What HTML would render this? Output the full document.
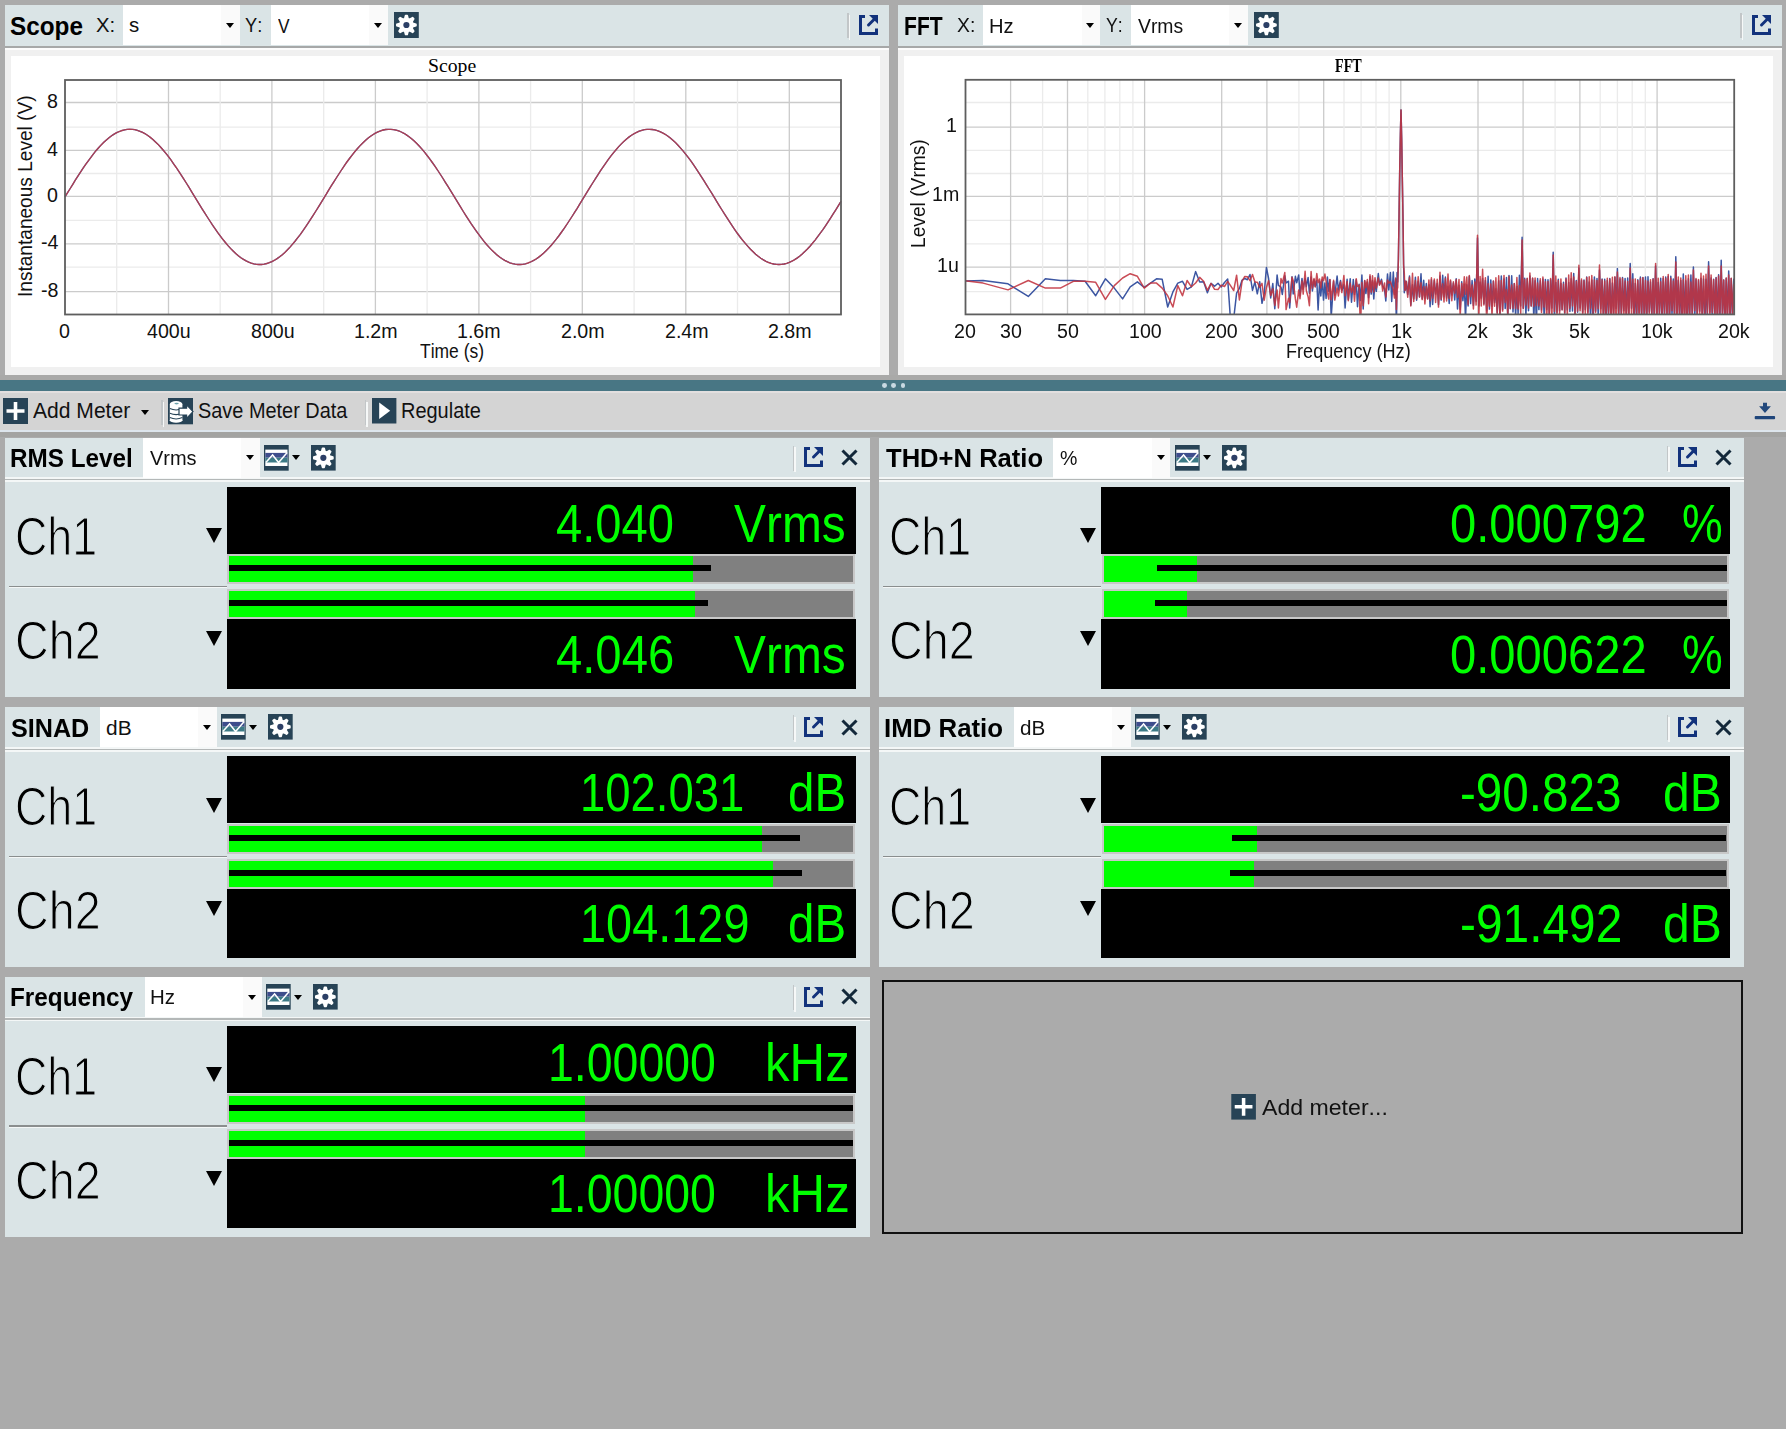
<!DOCTYPE html><html><head><meta charset="utf-8"><title>Meters</title><style>
*{box-sizing:border-box}
html,body{margin:0;padding:0}
body{width:1786px;height:1429px;background:#ababab;overflow:hidden;position:relative;font-family:"Liberation Sans",sans-serif;color:#000}
.abs{position:absolute}
.t{position:absolute;white-space:nowrap;transform-origin:0 0;font-kerning:none}
.panel{position:absolute;background:#f0f0f0}
.hdr{position:absolute;left:0;top:0;right:0;background:#dae4e6}
.dd{position:absolute;background:#fff}
.dd .btn{position:absolute;right:0;top:0;bottom:0;width:18.5px;background:#fafafa}
.tri{position:absolute;width:0;height:0;border-left:4.5px solid transparent;border-right:4.5px solid transparent;border-top:5px solid #000}
.blk{position:absolute;background:#000}
.bar{position:absolute;background:#808080;border:2px solid #c8c8c8;overflow:hidden}
.bar i{position:absolute;left:0;top:0;bottom:0;background:#00ff00}
.bar b{position:absolute;top:9.2px;height:6.1px;background:#000}
svg{position:absolute;overflow:visible}
#w{position:absolute;left:0;top:0;width:1786px;height:1429px;filter:blur(0.45px)}
</style></head><body><div id="w">
<div class="panel" style="left:4.5px;top:5.0px;width:884.3px;height:369.8px"><div class="hdr" style="height:40.6px"></div><div class="abs" style="left:0;right:0;top:40.6px;height:2.2px;background:#a6a8a8"></div><div class="abs" style="left:0;right:0;top:42.8px;height:2.3px;background:#fcfcfc"></div><div class="abs" style="left:6.0px;top:50.5px;width:869.8px;height:311.0px;background:#fff"></div></div>
<div class="panel" style="left:897.5px;top:5.0px;width:884.0px;height:369.8px"><div class="hdr" style="height:40.6px"></div><div class="abs" style="left:0;right:0;top:40.6px;height:2.2px;background:#a6a8a8"></div><div class="abs" style="left:0;right:0;top:42.8px;height:2.3px;background:#fcfcfc"></div><div class="abs" style="left:6.2px;top:50.5px;width:869.6px;height:311.0px;background:#fff"></div></div>
<div class="t " style="left:9.90px;top:9.53px;font-family:'Liberation Sans',sans-serif;font-weight:bold;font-size:24.86px;line-height:32.31px;color:#000;transform:scaleX(0.9778);">Scope</div>
<div class="t " style="left:95.84px;top:10.59px;font-family:'Liberation Sans',sans-serif;font-weight:normal;font-size:21.08px;line-height:27.40px;color:#111;transform:scaleX(0.9649);">X:</div>
<div class="dd" style="left:123.0px;top:5.0px;width:116.6px;height:40.0px"><div class="btn"></div><div class="tri" style="left:102.8px;top:17.8px;border-left-width:4.3px;border-right-width:4.3px;border-top-width:5.0px"></div></div>
<div class="t " style="left:128.93px;top:11.49px;font-family:'Liberation Sans',sans-serif;font-weight:normal;font-size:21.08px;line-height:27.40px;color:#111;transform:scaleX(0.9685);">s</div>
<div class="t " style="left:245.40px;top:10.59px;font-family:'Liberation Sans',sans-serif;font-weight:normal;font-size:21.08px;line-height:27.40px;color:#111;transform:scaleX(0.8673);">Y:</div>
<div class="dd" style="left:270.6px;top:5.0px;width:117.0px;height:40.0px"><div class="btn"></div><div class="tri" style="left:103.2px;top:17.8px;border-left-width:4.3px;border-right-width:4.3px;border-top-width:5.0px"></div></div>
<div class="t " style="left:278.12px;top:11.59px;font-family:'Liberation Sans',sans-serif;font-weight:normal;font-size:21.08px;line-height:27.40px;color:#111;transform:scaleX(0.8218);">V</div>
<svg style="left:393.5px;top:11.6px" width="24.8" height="26.0" viewBox="0 0 24.8 26.0"><rect width="24.8" height="26.0" fill="#274356"/><polygon points="11.57,3.44 13.23,3.44 14.09,6.62 15.71,7.29 18.58,5.65 19.75,6.82 18.11,9.69 18.78,11.31 21.96,12.17 21.96,13.83 18.78,14.69 18.11,16.31 19.75,19.18 18.58,20.35 15.71,18.71 14.09,19.38 13.23,22.56 11.57,22.56 10.71,19.38 9.09,18.71 6.22,20.35 5.05,19.18 6.69,16.31 6.02,14.69 2.84,13.83 2.84,12.17 6.02,11.31 6.69,9.69 5.05,6.82 6.22,5.65 9.09,7.29 10.71,6.62" fill="#fff" stroke="#fff" stroke-width="1.6" stroke-linejoin="round"/><circle cx="12.40" cy="13.00" r="3.1" fill="#2c3f66"/></svg>
<div class="abs" style="left:847.0px;top:13.0px;width:1.5px;height:25.0px;background:#c2c6c8"></div><div class="abs" style="left:848.5px;top:14.5px;width:1.5px;height:25.0px;background:#f6f8f8"></div>
<svg style="left:858.8px;top:14.8px" width="19" height="20" viewBox="0 0 19 20"><path d="M6 1.5H1.5V18.5H17.5V13.5" fill="none" stroke="#12327c" stroke-width="3"/><path d="M9.5 10 L15.5 4" fill="none" stroke="#12327c" stroke-width="3" stroke-linecap="round"/><path d="M10 0H19V9Z" fill="#12327c"/></svg>
<div class="t " style="left:903.89px;top:9.53px;font-family:'Liberation Sans',sans-serif;font-weight:bold;font-size:24.86px;line-height:32.31px;color:#000;transform:scaleX(0.8483);">FFT</div>
<div class="t " style="left:957.06px;top:10.59px;font-family:'Liberation Sans',sans-serif;font-weight:normal;font-size:21.08px;line-height:27.40px;color:#111;transform:scaleX(0.9192);">X:</div>
<div class="dd" style="left:983.0px;top:5.0px;width:117.0px;height:40.0px"><div class="btn"></div><div class="tri" style="left:103.2px;top:17.8px;border-left-width:4.3px;border-right-width:4.3px;border-top-width:5.0px"></div></div>
<div class="t " style="left:988.74px;top:11.59px;font-family:'Liberation Sans',sans-serif;font-weight:normal;font-size:21.08px;line-height:27.40px;color:#111;transform:scaleX(0.9574);">Hz</div>
<div class="t " style="left:1106.41px;top:10.59px;font-family:'Liberation Sans',sans-serif;font-weight:normal;font-size:21.08px;line-height:27.40px;color:#111;transform:scaleX(0.8388);">Y:</div>
<div class="dd" style="left:1130.6px;top:5.0px;width:117.0px;height:40.0px"><div class="btn"></div><div class="tri" style="left:103.2px;top:17.8px;border-left-width:4.3px;border-right-width:4.3px;border-top-width:5.0px"></div></div>
<div class="t " style="left:1138.11px;top:11.59px;font-family:'Liberation Sans',sans-serif;font-weight:normal;font-size:21.08px;line-height:27.40px;color:#111;transform:scaleX(0.9189);">Vrms</div>
<svg style="left:1254.0px;top:11.6px" width="24.8" height="26.0" viewBox="0 0 24.8 26.0"><rect width="24.8" height="26.0" fill="#274356"/><polygon points="11.57,3.44 13.23,3.44 14.09,6.62 15.71,7.29 18.58,5.65 19.75,6.82 18.11,9.69 18.78,11.31 21.96,12.17 21.96,13.83 18.78,14.69 18.11,16.31 19.75,19.18 18.58,20.35 15.71,18.71 14.09,19.38 13.23,22.56 11.57,22.56 10.71,19.38 9.09,18.71 6.22,20.35 5.05,19.18 6.69,16.31 6.02,14.69 2.84,13.83 2.84,12.17 6.02,11.31 6.69,9.69 5.05,6.82 6.22,5.65 9.09,7.29 10.71,6.62" fill="#fff" stroke="#fff" stroke-width="1.6" stroke-linejoin="round"/><circle cx="12.40" cy="13.00" r="3.1" fill="#2c3f66"/></svg>
<div class="abs" style="left:1740.0px;top:13.0px;width:1.5px;height:25.0px;background:#c2c6c8"></div><div class="abs" style="left:1741.5px;top:14.5px;width:1.5px;height:25.0px;background:#f6f8f8"></div>
<svg style="left:1751.8px;top:14.8px" width="19" height="20" viewBox="0 0 19 20"><path d="M6 1.5H1.5V18.5H17.5V13.5" fill="none" stroke="#12327c" stroke-width="3"/><path d="M9.5 10 L15.5 4" fill="none" stroke="#12327c" stroke-width="3" stroke-linecap="round"/><path d="M10 0H19V9Z" fill="#12327c"/></svg>
<svg style="left:0;top:0" width="893" height="376" viewBox="0 0 893 376"><line x1="65.0" y1="102.5" x2="841.0" y2="102.5" stroke="#cbcbcb" stroke-width="1.3"/><line x1="65.0" y1="127.2" x2="841.0" y2="127.2" stroke="#ebebeb" stroke-width="1.3"/><line x1="65.0" y1="150.4" x2="841.0" y2="150.4" stroke="#cbcbcb" stroke-width="1.3"/><line x1="65.0" y1="173.5" x2="841.0" y2="173.5" stroke="#ebebeb" stroke-width="1.3"/><line x1="65.0" y1="196.3" x2="841.0" y2="196.3" stroke="#cbcbcb" stroke-width="1.3"/><line x1="65.0" y1="220.4" x2="841.0" y2="220.4" stroke="#ebebeb" stroke-width="1.3"/><line x1="65.0" y1="243.9" x2="841.0" y2="243.9" stroke="#cbcbcb" stroke-width="1.3"/><line x1="65.0" y1="267.2" x2="841.0" y2="267.2" stroke="#ebebeb" stroke-width="1.3"/><line x1="65.0" y1="291.7" x2="841.0" y2="291.7" stroke="#cbcbcb" stroke-width="1.3"/><line x1="116.7" y1="80.0" x2="116.7" y2="314.5" stroke="#ebebeb" stroke-width="1.3"/><line x1="168.5" y1="80.0" x2="168.5" y2="314.5" stroke="#cbcbcb" stroke-width="1.3"/><line x1="220.2" y1="80.0" x2="220.2" y2="314.5" stroke="#ebebeb" stroke-width="1.3"/><line x1="271.9" y1="80.0" x2="271.9" y2="314.5" stroke="#cbcbcb" stroke-width="1.3"/><line x1="323.7" y1="80.0" x2="323.7" y2="314.5" stroke="#ebebeb" stroke-width="1.3"/><line x1="375.4" y1="80.0" x2="375.4" y2="314.5" stroke="#cbcbcb" stroke-width="1.3"/><line x1="427.1" y1="80.0" x2="427.1" y2="314.5" stroke="#ebebeb" stroke-width="1.3"/><line x1="478.9" y1="80.0" x2="478.9" y2="314.5" stroke="#cbcbcb" stroke-width="1.3"/><line x1="530.6" y1="80.0" x2="530.6" y2="314.5" stroke="#ebebeb" stroke-width="1.3"/><line x1="582.3" y1="80.0" x2="582.3" y2="314.5" stroke="#cbcbcb" stroke-width="1.3"/><line x1="634.1" y1="80.0" x2="634.1" y2="314.5" stroke="#ebebeb" stroke-width="1.3"/><line x1="685.8" y1="80.0" x2="685.8" y2="314.5" stroke="#cbcbcb" stroke-width="1.3"/><line x1="737.5" y1="80.0" x2="737.5" y2="314.5" stroke="#ebebeb" stroke-width="1.3"/><line x1="789.3" y1="80.0" x2="789.3" y2="314.5" stroke="#cbcbcb" stroke-width="1.3"/><polyline points="65.0,196.9 67.6,192.7 70.2,188.5 72.8,184.3 75.3,180.1 77.9,176.1 80.5,172.1 83.1,168.2 85.7,164.4 88.3,160.8 90.9,157.3 93.5,153.9 96.0,150.7 98.6,147.7 101.2,144.9 103.8,142.3 106.4,139.9 109.0,137.7 111.6,135.8 114.1,134.1 116.7,132.7 119.3,131.5 121.9,130.5 124.5,129.8 127.1,129.4 129.7,129.3 132.3,129.4 134.8,129.7 137.4,130.4 140.0,131.3 142.6,132.4 145.2,133.8 147.8,135.5 150.4,137.4 152.9,139.5 155.5,141.9 158.1,144.4 160.7,147.2 163.3,150.2 165.9,153.3 168.5,156.7 171.1,160.1 173.6,163.8 176.2,167.5 178.8,171.4 181.4,175.4 184.0,179.4 186.6,183.5 189.2,187.7 191.7,191.9 194.3,196.2 196.9,200.4 199.5,204.6 202.1,208.8 204.7,212.9 207.3,217.0 209.9,221.0 212.4,224.9 215.0,228.7 217.6,232.4 220.2,235.9 222.8,239.3 225.4,242.5 228.0,245.6 230.5,248.4 233.1,251.0 235.7,253.5 238.3,255.7 240.9,257.7 243.5,259.4 246.1,260.9 248.7,262.1 251.2,263.1 253.8,263.9 256.4,264.3 259.0,264.5 261.6,264.5 264.2,264.1 266.8,263.5 269.3,262.7 271.9,261.6 274.5,260.2 277.1,258.6 279.7,256.8 282.3,254.7 284.9,252.4 287.5,249.8 290.0,247.1 292.6,244.1 295.2,241.0 297.8,237.7 300.4,234.3 303.0,230.7 305.6,226.9 308.1,223.1 310.7,219.1 313.3,215.1 315.9,211.0 318.5,206.8 321.1,202.6 323.7,198.4 326.3,194.2 328.8,189.9 331.4,185.7 334.0,181.6 336.6,177.5 339.2,173.5 341.8,169.5 344.4,165.7 346.9,162.0 349.5,158.5 352.1,155.1 354.7,151.8 357.3,148.8 359.9,145.9 362.5,143.2 365.1,140.7 367.6,138.5 370.2,136.5 372.8,134.7 375.4,133.1 378.0,131.9 380.6,130.8 383.2,130.0 385.7,129.5 388.3,129.3 390.9,129.3 393.5,129.6 396.1,130.1 398.7,130.9 401.3,132.0 403.9,133.3 406.4,134.9 409.0,136.7 411.6,138.7 414.2,141.0 416.8,143.5 419.4,146.2 422.0,149.1 424.5,152.2 427.1,155.5 429.7,158.9 432.3,162.5 434.9,166.2 437.5,170.0 440.1,174.0 442.7,178.0 445.2,182.1 447.8,186.2 450.4,190.4 453.0,194.7 455.6,198.9 458.2,203.1 460.8,207.3 463.3,211.5 465.9,215.6 468.5,219.6 471.1,223.6 473.7,227.4 476.3,231.1 478.9,234.7 481.5,238.1 484.0,241.4 486.6,244.5 489.2,247.4 491.8,250.1 494.4,252.6 497.0,254.9 499.6,257.0 502.1,258.8 504.7,260.4 507.3,261.7 509.9,262.8 512.5,263.6 515.1,264.2 517.7,264.5 520.3,264.5 522.8,264.3 525.4,263.8 528.0,263.0 530.6,262.0 533.2,260.7 535.8,259.2 538.4,257.4 540.9,255.4 543.5,253.2 546.1,250.7 548.7,248.1 551.3,245.2 553.9,242.1 556.5,238.9 559.1,235.5 561.6,232.0 564.2,228.3 566.8,224.5 569.4,220.5 572.0,216.5 574.6,212.4 577.2,208.3 579.7,204.1 582.3,199.9 584.9,195.6 587.5,191.4 590.1,187.2 592.7,183.0 595.3,178.9 597.9,174.9 600.4,170.9 603.0,167.1 605.6,163.3 608.2,159.7 610.8,156.2 613.4,152.9 616.0,149.8 618.5,146.9 621.1,144.1 623.7,141.6 626.3,139.2 628.9,137.1 631.5,135.3 634.1,133.7 636.7,132.3 639.2,131.2 641.8,130.3 644.4,129.7 647.0,129.3 649.6,129.3 652.2,129.5 654.8,129.9 657.3,130.6 659.9,131.6 662.5,132.8 665.1,134.3 667.7,136.0 670.3,138.0 672.9,140.2 675.5,142.6 678.0,145.2 680.6,148.1 683.2,151.1 685.8,154.3 688.4,157.7 691.0,161.2 693.6,164.9 696.1,168.7 698.7,172.6 701.3,176.6 703.9,180.6 706.5,184.8 709.1,189.0 711.7,193.2 714.3,197.4 716.8,201.6 719.4,205.9 722.0,210.0 724.6,214.2 727.2,218.2 729.8,222.2 732.4,226.1 734.9,229.8 737.5,233.5 740.1,237.0 742.7,240.3 745.3,243.4 747.9,246.4 750.5,249.2 753.1,251.8 755.6,254.2 758.2,256.3 760.8,258.2 763.4,259.9 766.0,261.3 768.6,262.5 771.2,263.4 773.7,264.0 776.3,264.4 778.9,264.5 781.5,264.4 784.1,264.0 786.7,263.3 789.3,262.4 791.9,261.2 794.4,259.8 797.0,258.1 799.6,256.2 802.2,254.0 804.8,251.6 807.4,249.0 810.0,246.2 812.5,243.2 815.1,240.1 817.7,236.7 820.3,233.2 822.9,229.6 825.5,225.8 828.1,221.9 830.7,217.9 833.2,213.9 835.8,209.8 838.4,205.6 841.0,201.4" fill="none" stroke="#3d55a0" stroke-width="1.3"/><polyline points="65.0,196.9 67.6,192.7 70.2,188.5 72.8,184.3 75.3,180.1 77.9,176.1 80.5,172.1 83.1,168.2 85.7,164.4 88.3,160.8 90.9,157.3 93.5,153.9 96.0,150.7 98.6,147.7 101.2,144.9 103.8,142.3 106.4,139.9 109.0,137.7 111.6,135.8 114.1,134.1 116.7,132.7 119.3,131.5 121.9,130.5 124.5,129.8 127.1,129.4 129.7,129.3 132.3,129.4 134.8,129.7 137.4,130.4 140.0,131.3 142.6,132.4 145.2,133.8 147.8,135.5 150.4,137.4 152.9,139.5 155.5,141.9 158.1,144.4 160.7,147.2 163.3,150.2 165.9,153.3 168.5,156.7 171.1,160.1 173.6,163.8 176.2,167.5 178.8,171.4 181.4,175.4 184.0,179.4 186.6,183.5 189.2,187.7 191.7,191.9 194.3,196.2 196.9,200.4 199.5,204.6 202.1,208.8 204.7,212.9 207.3,217.0 209.9,221.0 212.4,224.9 215.0,228.7 217.6,232.4 220.2,235.9 222.8,239.3 225.4,242.5 228.0,245.6 230.5,248.4 233.1,251.0 235.7,253.5 238.3,255.7 240.9,257.7 243.5,259.4 246.1,260.9 248.7,262.1 251.2,263.1 253.8,263.9 256.4,264.3 259.0,264.5 261.6,264.5 264.2,264.1 266.8,263.5 269.3,262.7 271.9,261.6 274.5,260.2 277.1,258.6 279.7,256.8 282.3,254.7 284.9,252.4 287.5,249.8 290.0,247.1 292.6,244.1 295.2,241.0 297.8,237.7 300.4,234.3 303.0,230.7 305.6,226.9 308.1,223.1 310.7,219.1 313.3,215.1 315.9,211.0 318.5,206.8 321.1,202.6 323.7,198.4 326.3,194.2 328.8,189.9 331.4,185.7 334.0,181.6 336.6,177.5 339.2,173.5 341.8,169.5 344.4,165.7 346.9,162.0 349.5,158.5 352.1,155.1 354.7,151.8 357.3,148.8 359.9,145.9 362.5,143.2 365.1,140.7 367.6,138.5 370.2,136.5 372.8,134.7 375.4,133.1 378.0,131.9 380.6,130.8 383.2,130.0 385.7,129.5 388.3,129.3 390.9,129.3 393.5,129.6 396.1,130.1 398.7,130.9 401.3,132.0 403.9,133.3 406.4,134.9 409.0,136.7 411.6,138.7 414.2,141.0 416.8,143.5 419.4,146.2 422.0,149.1 424.5,152.2 427.1,155.5 429.7,158.9 432.3,162.5 434.9,166.2 437.5,170.0 440.1,174.0 442.7,178.0 445.2,182.1 447.8,186.2 450.4,190.4 453.0,194.7 455.6,198.9 458.2,203.1 460.8,207.3 463.3,211.5 465.9,215.6 468.5,219.6 471.1,223.6 473.7,227.4 476.3,231.1 478.9,234.7 481.5,238.1 484.0,241.4 486.6,244.5 489.2,247.4 491.8,250.1 494.4,252.6 497.0,254.9 499.6,257.0 502.1,258.8 504.7,260.4 507.3,261.7 509.9,262.8 512.5,263.6 515.1,264.2 517.7,264.5 520.3,264.5 522.8,264.3 525.4,263.8 528.0,263.0 530.6,262.0 533.2,260.7 535.8,259.2 538.4,257.4 540.9,255.4 543.5,253.2 546.1,250.7 548.7,248.1 551.3,245.2 553.9,242.1 556.5,238.9 559.1,235.5 561.6,232.0 564.2,228.3 566.8,224.5 569.4,220.5 572.0,216.5 574.6,212.4 577.2,208.3 579.7,204.1 582.3,199.9 584.9,195.6 587.5,191.4 590.1,187.2 592.7,183.0 595.3,178.9 597.9,174.9 600.4,170.9 603.0,167.1 605.6,163.3 608.2,159.7 610.8,156.2 613.4,152.9 616.0,149.8 618.5,146.9 621.1,144.1 623.7,141.6 626.3,139.2 628.9,137.1 631.5,135.3 634.1,133.7 636.7,132.3 639.2,131.2 641.8,130.3 644.4,129.7 647.0,129.3 649.6,129.3 652.2,129.5 654.8,129.9 657.3,130.6 659.9,131.6 662.5,132.8 665.1,134.3 667.7,136.0 670.3,138.0 672.9,140.2 675.5,142.6 678.0,145.2 680.6,148.1 683.2,151.1 685.8,154.3 688.4,157.7 691.0,161.2 693.6,164.9 696.1,168.7 698.7,172.6 701.3,176.6 703.9,180.6 706.5,184.8 709.1,189.0 711.7,193.2 714.3,197.4 716.8,201.6 719.4,205.9 722.0,210.0 724.6,214.2 727.2,218.2 729.8,222.2 732.4,226.1 734.9,229.8 737.5,233.5 740.1,237.0 742.7,240.3 745.3,243.4 747.9,246.4 750.5,249.2 753.1,251.8 755.6,254.2 758.2,256.3 760.8,258.2 763.4,259.9 766.0,261.3 768.6,262.5 771.2,263.4 773.7,264.0 776.3,264.4 778.9,264.5 781.5,264.4 784.1,264.0 786.7,263.3 789.3,262.4 791.9,261.2 794.4,259.8 797.0,258.1 799.6,256.2 802.2,254.0 804.8,251.6 807.4,249.0 810.0,246.2 812.5,243.2 815.1,240.1 817.7,236.7 820.3,233.2 822.9,229.6 825.5,225.8 828.1,221.9 830.7,217.9 833.2,213.9 835.8,209.8 838.4,205.6 841.0,201.4" fill="none" stroke="#b83c4a" stroke-width="1.35" opacity="0.9"/><rect x="65.0" y="80.0" width="776.0" height="234.5" fill="none" stroke="#5e5e5e" stroke-width="1.8"/></svg>
<div class="t " style="left:47.34px;top:88.95px;font-family:'Liberation Sans',sans-serif;font-weight:normal;font-size:19.91px;line-height:25.89px;color:#111;transform:scaleX(0.9850);">8</div>
<div class="t " style="left:47.07px;top:136.85px;font-family:'Liberation Sans',sans-serif;font-weight:normal;font-size:19.91px;line-height:25.89px;color:#111;transform:scaleX(0.9850);">4</div>
<div class="t " style="left:47.26px;top:182.75px;font-family:'Liberation Sans',sans-serif;font-weight:normal;font-size:19.91px;line-height:25.89px;color:#111;transform:scaleX(0.9850);">0</div>
<div class="t " style="left:40.53px;top:230.35px;font-family:'Liberation Sans',sans-serif;font-weight:normal;font-size:19.91px;line-height:25.89px;color:#111;transform:scaleX(0.9850);">-4</div>
<div class="t " style="left:40.81px;top:278.15px;font-family:'Liberation Sans',sans-serif;font-weight:normal;font-size:19.91px;line-height:25.89px;color:#111;transform:scaleX(0.9850);">-8</div>
<div class="t " style="left:58.95px;top:318.75px;font-family:'Liberation Sans',sans-serif;font-weight:normal;font-size:19.91px;line-height:25.89px;color:#111;transform:scaleX(0.9850);">0</div>
<div class="t " style="left:147.48px;top:318.75px;font-family:'Liberation Sans',sans-serif;font-weight:normal;font-size:19.91px;line-height:25.89px;color:#111;transform:scaleX(0.9850);">400u</div>
<div class="t " style="left:250.74px;top:318.75px;font-family:'Liberation Sans',sans-serif;font-weight:normal;font-size:19.91px;line-height:25.89px;color:#111;transform:scaleX(0.9850);">800u</div>
<div class="t " style="left:353.90px;top:318.75px;font-family:'Liberation Sans',sans-serif;font-weight:normal;font-size:19.91px;line-height:25.89px;color:#111;transform:scaleX(0.9850);">1.2m</div>
<div class="t " style="left:457.36px;top:318.75px;font-family:'Liberation Sans',sans-serif;font-weight:normal;font-size:19.91px;line-height:25.89px;color:#111;transform:scaleX(0.9850);">1.6m</div>
<div class="t " style="left:561.08px;top:318.75px;font-family:'Liberation Sans',sans-serif;font-weight:normal;font-size:19.91px;line-height:25.89px;color:#111;transform:scaleX(0.9850);">2.0m</div>
<div class="t " style="left:664.55px;top:318.75px;font-family:'Liberation Sans',sans-serif;font-weight:normal;font-size:19.91px;line-height:25.89px;color:#111;transform:scaleX(0.9850);">2.4m</div>
<div class="t " style="left:768.02px;top:318.75px;font-family:'Liberation Sans',sans-serif;font-weight:normal;font-size:19.91px;line-height:25.89px;color:#111;transform:scaleX(0.9850);">2.8m</div>
<div class="t " style="left:419.71px;top:337.87px;font-family:'Liberation Sans',sans-serif;font-weight:normal;font-size:20.49px;line-height:26.64px;color:#111;transform:scaleX(0.8528);">Time (s)</div>
<div class="t " style="left:427.58px;top:52.80px;font-family:'Liberation Serif',serif;font-weight:normal;font-size:19.85px;line-height:25.81px;color:#000;transform:scaleX(0.9935);">Scope</div>
<div class="t " style="left:12.53px;top:296.56px;font-family:'Liberation Sans',sans-serif;font-weight:normal;font-size:19.33px;line-height:25.13px;color:#111;transform:rotate(-90deg) scaleX(0.9871);">Instantaneous Level (V)</div>
<svg style="left:893px;top:0" width="893" height="376" viewBox="893 0 893 376"><defs><clipPath id="fc"><rect x="965.5" y="79.8" width="768.7" height="234.6"/></clipPath></defs><line x1="965.5" y1="102.5" x2="1734.2" y2="102.5" stroke="#ebebeb" stroke-width="1.3"/><line x1="965.5" y1="127.2" x2="1734.2" y2="127.2" stroke="#cbcbcb" stroke-width="1.3"/><line x1="965.5" y1="150.4" x2="1734.2" y2="150.4" stroke="#ebebeb" stroke-width="1.3"/><line x1="965.5" y1="173.5" x2="1734.2" y2="173.5" stroke="#ebebeb" stroke-width="1.3"/><line x1="965.5" y1="196.3" x2="1734.2" y2="196.3" stroke="#cbcbcb" stroke-width="1.3"/><line x1="965.5" y1="220.4" x2="1734.2" y2="220.4" stroke="#ebebeb" stroke-width="1.3"/><line x1="965.5" y1="243.9" x2="1734.2" y2="243.9" stroke="#ebebeb" stroke-width="1.3"/><line x1="965.5" y1="267.2" x2="1734.2" y2="267.2" stroke="#cbcbcb" stroke-width="1.3"/><line x1="965.5" y1="291.7" x2="1734.2" y2="291.7" stroke="#ebebeb" stroke-width="1.3"/><line x1="1010.6" y1="79.8" x2="1010.6" y2="314.4" stroke="#cbcbcb" stroke-width="1.3"/><line x1="1042.6" y1="79.8" x2="1042.6" y2="314.4" stroke="#ebebeb" stroke-width="1.3"/><line x1="1067.5" y1="79.8" x2="1067.5" y2="314.4" stroke="#cbcbcb" stroke-width="1.3"/><line x1="1087.8" y1="79.8" x2="1087.8" y2="314.4" stroke="#ebebeb" stroke-width="1.3"/><line x1="1104.9" y1="79.8" x2="1104.9" y2="314.4" stroke="#ebebeb" stroke-width="1.3"/><line x1="1119.8" y1="79.8" x2="1119.8" y2="314.4" stroke="#ebebeb" stroke-width="1.3"/><line x1="1132.9" y1="79.8" x2="1132.9" y2="314.4" stroke="#ebebeb" stroke-width="1.3"/><line x1="1144.6" y1="79.8" x2="1144.6" y2="314.4" stroke="#cbcbcb" stroke-width="1.3"/><line x1="1221.7" y1="79.8" x2="1221.7" y2="314.4" stroke="#cbcbcb" stroke-width="1.3"/><line x1="1266.9" y1="79.8" x2="1266.9" y2="314.4" stroke="#cbcbcb" stroke-width="1.3"/><line x1="1298.9" y1="79.8" x2="1298.9" y2="314.4" stroke="#ebebeb" stroke-width="1.3"/><line x1="1323.7" y1="79.8" x2="1323.7" y2="314.4" stroke="#cbcbcb" stroke-width="1.3"/><line x1="1344.0" y1="79.8" x2="1344.0" y2="314.4" stroke="#ebebeb" stroke-width="1.3"/><line x1="1361.1" y1="79.8" x2="1361.1" y2="314.4" stroke="#ebebeb" stroke-width="1.3"/><line x1="1376.0" y1="79.8" x2="1376.0" y2="314.4" stroke="#ebebeb" stroke-width="1.3"/><line x1="1389.1" y1="79.8" x2="1389.1" y2="314.4" stroke="#ebebeb" stroke-width="1.3"/><line x1="1400.8" y1="79.8" x2="1400.8" y2="314.4" stroke="#cbcbcb" stroke-width="1.3"/><line x1="1478.0" y1="79.8" x2="1478.0" y2="314.4" stroke="#cbcbcb" stroke-width="1.3"/><line x1="1523.1" y1="79.8" x2="1523.1" y2="314.4" stroke="#cbcbcb" stroke-width="1.3"/><line x1="1555.1" y1="79.8" x2="1555.1" y2="314.4" stroke="#ebebeb" stroke-width="1.3"/><line x1="1579.9" y1="79.8" x2="1579.9" y2="314.4" stroke="#cbcbcb" stroke-width="1.3"/><line x1="1600.2" y1="79.8" x2="1600.2" y2="314.4" stroke="#ebebeb" stroke-width="1.3"/><line x1="1617.4" y1="79.8" x2="1617.4" y2="314.4" stroke="#ebebeb" stroke-width="1.3"/><line x1="1632.2" y1="79.8" x2="1632.2" y2="314.4" stroke="#ebebeb" stroke-width="1.3"/><line x1="1645.3" y1="79.8" x2="1645.3" y2="314.4" stroke="#ebebeb" stroke-width="1.3"/><line x1="1657.1" y1="79.8" x2="1657.1" y2="314.4" stroke="#cbcbcb" stroke-width="1.3"/><polyline clip-path="url(#fc)" points="951.1,281.3 983.1,280.5 1008.0,283.8 1028.3,296.4 1045.4,278.8 1060.3,280.5 1073.4,280.5 1085.1,281.3 1095.7,295.7 1105.4,278.8 1114.3,288.1 1122.6,298.9 1130.2,286.8 1137.4,281.8 1144.2,287.3 1150.5,283.1 1156.5,278.8 1162.2,279.3 1167.7,307.0 1172.9,291.9 1177.8,283.1 1182.5,281.3 1187.1,289.4 1191.4,286.8 1195.6,271.6 1199.7,282.1 1203.6,281.8 1207.4,292.7 1211.0,283.4 1214.6,286.2 1218.0,283.2 1221.3,286.9 1224.5,282.5 1227.7,279.1 1230.7,322.9 1233.7,318.7 1236.6,293.1 1239.4,288.4 1242.1,280.1 1244.8,278.5 1247.4,279.7 1250.0,274.5 1252.5,290.4 1254.9,281.9 1257.3,293.8 1259.7,281.7 1262.0,303.3 1264.2,293.9 1266.4,267.5 1268.6,278.5 1270.7,298.0 1272.8,283.6 1274.8,308.8 1277.1,275.1 1278.4,285.3 1281.0,287.1 1282.3,294.4 1284.8,275.7 1286.1,283.0 1288.5,281.2 1289.7,307.9 1292.0,276.7 1293.2,293.9 1295.4,276.3 1296.7,282.7 1298.7,274.9 1300.0,295.4 1302.0,278.4 1303.2,288.9 1305.1,278.7 1306.3,286.7 1308.1,277.4 1309.4,293.3 1311.1,277.0 1312.4,291.0 1314.0,279.4 1315.2,286.4 1316.8,280.5 1318.1,309.9 1319.6,281.3 1320.8,296.0 1322.2,279.5 1323.5,300.1 1324.9,283.1 1326.1,298.4 1327.4,276.9 1328.7,291.3 1329.9,279.7 1331.2,317.1 1333.6,281.4 1334.8,295.1 1337.1,276.1 1338.4,290.1 1340.5,280.4 1341.8,290.6 1343.9,284.5 1345.1,308.0 1347.1,279.3 1348.3,299.5 1350.2,278.7 1351.5,302.3 1353.3,279.6 1354.5,294.4 1356.2,279.8 1357.5,306.8 1359.1,284.2 1360.4,300.6 1361.9,275.1 1363.2,308.9 1364.7,280.8 1365.9,293.6 1367.4,282.0 1368.6,297.7 1370.0,276.5 1371.2,294.1 1372.5,280.6 1373.8,299.0 1375.0,281.6 1376.3,291.3 1378.3,273.5 1379.5,284.4 1381.5,279.3 1382.7,286.2 1384.5,288.8 1385.8,300.9 1387.5,273.9 1388.8,289.9 1390.4,272.5 1391.7,301.4 1393.3,272.0 1394.5,294.6 1395.7,279.1 1396.4,330.0 1397.1,272.5 1397.7,282.0 1398.4,259.0 1399.1,213.1 1399.7,170.9 1400.4,133.9 1401.0,110.0 1401.7,139.9 1402.3,176.9 1403.0,219.1 1403.6,265.0 1404.3,292.8 1404.9,280.5 1405.5,290.1 1406.4,281.8 1407.7,294.4 1409.5,275.9 1410.8,305.1 1412.5,284.8 1413.7,298.9 1415.4,277.3 1416.6,300.3 1418.2,281.2 1419.5,297.0 1421.0,273.7 1422.2,298.8 1423.7,280.3 1424.9,298.5 1426.3,283.6 1427.6,298.7 1428.9,284.8 1430.1,306.7 1431.4,279.7 1432.6,304.5 1434.3,280.6 1435.6,294.1 1437.2,283.6 1438.5,304.7 1440.0,276.1 1441.2,300.1 1442.7,275.2 1444.0,296.7 1445.4,277.0 1446.6,298.1 1448.0,286.3 1449.2,303.5 1450.5,281.1 1451.8,294.9 1453.4,283.1 1454.7,300.0 1456.2,278.8 1457.5,309.0 1459.0,285.2 1460.2,309.4 1461.7,281.8 1462.9,300.8 1464.3,284.2 1465.5,319.3 1466.8,284.8 1468.1,306.0 1469.3,276.4 1470.6,303.6 1472.1,280.5 1473.4,305.4 1474.8,279.1 1476.1,301.3 1477.5,238.0 1478.8,306.0 1480.1,282.1 1481.3,298.1 1482.6,278.5 1483.9,303.8 1485.4,280.4 1486.7,311.0 1488.1,276.2 1489.4,309.1 1490.8,279.9 1492.0,306.3 1493.4,281.3 1494.6,302.7 1495.9,288.7 1497.2,312.5 1498.7,280.7 1499.9,314.3 1501.3,276.0 1502.6,309.6 1504.0,278.9 1505.2,308.5 1506.5,277.4 1507.8,317.6 1509.0,275.6 1510.3,308.8 1511.7,275.8 1513.0,312.0 1514.3,283.7 1515.6,316.3 1516.9,286.5 1518.1,314.0 1519.4,275.3 1520.7,306.1 1522.1,237.3 1523.3,308.2 1524.7,278.3 1525.9,315.9 1527.2,278.7 1528.5,310.7 1529.9,275.9 1531.2,305.9 1532.6,278.4 1533.8,319.8 1535.1,280.7 1536.4,325.0 1537.6,278.5 1538.9,309.6 1540.3,280.7 1541.5,309.9 1542.9,279.0 1544.1,316.9 1545.4,279.5 1546.7,309.4 1548.0,279.7 1549.3,314.1 1550.6,279.8 1551.9,308.1 1553.2,252.3 1554.4,316.9 1555.8,282.4 1557.0,312.2 1558.3,279.3 1559.6,310.8 1560.9,283.4 1562.1,309.4 1563.5,282.3 1564.7,313.1 1566.0,278.1 1567.3,309.9 1568.7,282.5 1569.9,311.5 1571.2,278.8 1572.5,310.9 1573.7,273.4 1575.0,314.1 1576.3,280.4 1577.6,312.2 1578.9,268.0 1580.1,308.0 1581.5,280.5 1582.7,312.1 1584.0,279.9 1585.3,309.8 1586.7,277.0 1587.9,312.1 1589.2,282.0 1590.5,318.7 1591.8,280.1 1593.1,325.8 1594.4,276.9 1595.6,311.2 1597.0,278.5 1598.2,316.7 1599.5,270.0 1600.8,308.8 1602.1,279.0 1603.4,316.6 1604.7,279.2 1605.9,327.0 1607.3,280.4 1608.5,315.4 1609.8,278.4 1611.0,316.3 1612.4,283.0 1613.6,313.3 1614.9,277.3 1616.1,308.5 1617.4,268.5 1618.7,315.9 1620.0,278.9 1621.3,314.4 1622.5,277.5 1623.8,310.7 1625.1,278.5 1626.3,315.5 1627.7,278.0 1628.9,314.5 1630.2,263.5 1631.5,308.3 1632.8,273.7 1634.0,320.7 1635.3,283.4 1636.6,324.1 1637.8,279.8 1639.1,312.9 1640.4,277.1 1641.6,319.8 1642.9,277.7 1644.2,316.4 1645.5,276.9 1646.7,323.4 1648.0,276.7 1649.3,312.2 1650.5,282.0 1651.8,316.1 1653.1,278.8 1654.3,320.4 1655.6,266.0 1656.9,315.5 1658.2,282.4 1659.4,315.3 1660.7,278.3 1662.0,322.0 1663.2,278.4 1664.5,316.8 1665.7,277.1 1667.0,314.1 1668.2,276.5 1669.5,323.9 1670.8,276.2 1672.0,314.7 1673.3,279.0 1674.5,319.1 1675.8,256.8 1677.0,314.1 1678.3,280.3 1679.6,320.6 1680.8,280.6 1682.1,322.3 1683.3,274.0 1684.6,315.4 1685.8,280.8 1687.1,324.0 1688.4,278.7 1689.6,319.4 1690.9,275.0 1692.2,314.6 1693.4,267.0 1694.7,319.1 1696.0,279.5 1697.2,315.8 1698.5,280.5 1699.7,311.1 1701.0,278.2 1702.2,314.6 1703.5,278.9 1704.8,330.0 1706.0,279.2 1707.3,315.1 1708.6,261.8 1709.8,312.3 1711.1,277.9 1712.3,321.3 1713.6,279.3 1714.9,313.5 1716.1,277.4 1717.4,318.4 1718.6,274.8 1719.9,320.9 1721.2,260.3 1722.4,315.5 1723.7,280.1 1724.9,322.8 1726.2,278.3 1727.4,316.4 1728.7,271.0 1730.0,321.9 1731.2,278.4 1732.5,319.5 1733.7,279.2 1735.0,314.2" fill="none" stroke="#3c56a2" stroke-width="1.5" stroke-linejoin="round" opacity="1"/><polyline clip-path="url(#fc)" points="951.1,278.8 983.1,283.1 1008.0,289.9 1028.3,280.5 1045.4,288.1 1060.3,288.1 1073.4,281.3 1085.1,281.3 1095.7,282.3 1105.4,299.4 1114.3,285.6 1122.6,278.0 1130.2,273.7 1137.4,276.3 1144.2,288.1 1150.5,283.1 1156.5,283.1 1162.2,288.1 1167.7,295.7 1172.9,307.0 1177.8,285.6 1182.5,295.7 1187.1,280.5 1191.4,286.8 1195.6,283.0 1199.7,277.4 1203.6,281.2 1207.4,290.3 1211.0,283.4 1214.6,289.3 1218.0,289.5 1221.3,285.1 1224.5,286.5 1227.7,281.4 1230.7,285.9 1233.7,290.5 1236.6,275.2 1239.4,300.0 1242.1,281.1 1244.8,276.4 1247.4,276.7 1250.0,280.7 1252.5,274.5 1254.9,281.9 1257.3,282.2 1259.7,287.4 1262.0,283.3 1264.2,300.2 1266.4,287.6 1268.6,280.7 1270.7,295.5 1272.8,288.8 1274.8,305.3 1277.1,289.9 1278.4,308.0 1281.0,278.6 1282.3,283.1 1284.8,272.6 1286.1,309.6 1288.5,298.3 1289.7,302.5 1292.0,277.2 1293.2,280.6 1295.4,298.9 1296.7,307.2 1298.7,290.0 1300.0,298.7 1302.0,281.0 1303.2,294.1 1305.1,271.2 1306.3,290.5 1308.1,296.7 1309.4,305.7 1311.1,271.5 1312.4,288.2 1314.0,278.5 1315.2,286.9 1316.8,273.6 1318.1,282.8 1319.6,279.0 1320.8,288.0 1322.2,277.1 1323.5,280.5 1324.9,274.1 1326.1,281.5 1327.4,292.4 1328.7,299.1 1329.9,279.4 1331.2,299.7 1333.6,280.3 1334.8,300.1 1337.1,288.0 1338.4,296.0 1340.5,281.9 1341.8,292.6 1343.9,275.6 1345.1,295.7 1347.1,281.5 1348.3,300.7 1350.2,283.3 1351.5,292.5 1353.3,285.6 1354.5,301.3 1356.2,278.7 1357.5,286.5 1359.1,285.1 1360.4,330.0 1361.9,282.4 1363.2,305.6 1364.7,280.5 1365.9,287.7 1367.4,279.5 1368.6,303.7 1370.0,274.7 1371.2,292.3 1372.5,275.8 1373.8,291.9 1375.0,277.7 1376.3,288.1 1378.3,277.9 1379.5,285.3 1381.5,280.8 1382.7,290.9 1384.5,282.9 1385.8,296.9 1387.5,280.0 1388.8,283.1 1390.4,281.6 1391.7,285.4 1393.3,289.5 1394.5,298.1 1395.7,277.9 1396.4,309.4 1397.1,289.4 1397.7,287.5 1398.4,259.0 1399.1,213.1 1399.7,170.9 1400.4,133.9 1401.0,110.0 1401.7,139.9 1402.3,176.9 1403.0,219.1 1403.6,265.0 1404.3,273.4 1404.9,290.4 1405.5,287.4 1406.4,281.2 1407.7,297.3 1409.5,277.2 1410.8,305.9 1412.5,273.3 1413.7,301.5 1415.4,280.6 1416.6,298.9 1418.2,276.8 1419.5,296.9 1421.0,282.8 1422.2,299.6 1423.7,286.8 1424.9,303.9 1426.3,286.4 1427.6,298.9 1428.9,279.9 1430.1,300.8 1431.4,277.7 1432.6,298.2 1434.3,279.1 1435.6,302.4 1437.2,279.2 1438.5,307.1 1440.0,272.2 1441.2,299.3 1442.7,283.7 1444.0,302.0 1445.4,278.5 1446.6,300.9 1448.0,274.1 1449.2,298.5 1450.5,279.9 1451.8,300.7 1453.4,281.8 1454.7,293.2 1456.2,279.7 1457.5,297.2 1459.0,279.6 1460.2,316.4 1461.7,283.4 1462.9,296.4 1464.3,276.7 1465.5,294.2 1466.8,277.0 1468.1,304.5 1469.3,275.4 1470.6,296.6 1472.1,284.9 1473.4,308.9 1474.8,282.0 1476.1,305.1 1477.5,235.3 1478.8,317.9 1480.1,276.4 1481.3,306.0 1482.6,269.3 1483.9,305.0 1485.4,277.7 1486.7,323.1 1488.1,283.8 1489.4,306.3 1490.8,283.9 1492.0,316.7 1493.4,280.9 1494.6,306.3 1495.9,277.7 1497.2,313.9 1498.7,275.7 1499.9,317.4 1501.3,280.4 1502.6,311.1 1504.0,275.4 1505.2,302.5 1506.5,289.5 1507.8,316.0 1509.0,276.6 1510.3,308.5 1511.7,284.9 1513.0,308.2 1514.3,283.6 1515.6,308.4 1516.9,277.5 1518.1,308.9 1519.4,285.6 1520.7,313.7 1522.1,240.0 1523.3,308.2 1524.7,279.5 1525.9,305.1 1527.2,278.2 1528.5,308.1 1529.9,273.0 1531.2,305.9 1532.6,278.1 1533.8,306.5 1535.1,278.1 1536.4,305.4 1537.6,282.9 1538.9,306.0 1540.3,278.7 1541.5,312.4 1542.9,277.1 1544.1,307.0 1545.4,281.8 1546.7,320.9 1548.0,281.6 1549.3,317.4 1550.6,278.6 1551.9,318.3 1553.2,255.0 1554.4,311.6 1555.8,276.1 1557.0,315.1 1558.3,280.5 1559.6,313.7 1560.9,278.9 1562.1,309.9 1563.5,284.0 1564.7,313.1 1566.0,279.0 1567.3,315.6 1568.7,275.0 1569.9,308.2 1571.2,272.8 1572.5,306.0 1573.7,277.0 1575.0,314.7 1576.3,281.3 1577.6,311.1 1578.9,265.3 1580.1,310.6 1581.5,279.0 1582.7,318.0 1584.0,280.7 1585.3,313.8 1586.7,277.5 1587.9,315.7 1589.2,276.8 1590.5,308.4 1591.8,275.5 1593.1,313.2 1594.4,279.9 1595.6,312.6 1597.0,280.5 1598.2,308.7 1599.5,265.0 1600.8,316.2 1602.1,279.7 1603.4,320.3 1604.7,281.1 1605.9,318.5 1607.3,278.2 1608.5,313.1 1609.8,279.3 1611.0,329.0 1612.4,277.3 1613.6,323.6 1614.9,276.8 1616.1,325.5 1617.4,272.0 1618.7,315.4 1620.0,277.6 1621.3,315.4 1622.5,278.4 1623.8,318.5 1625.1,281.1 1626.3,325.3 1627.7,281.5 1628.9,317.6 1630.2,268.0 1631.5,315.1 1632.8,279.2 1634.0,316.4 1635.3,278.9 1636.6,315.4 1637.8,280.5 1639.1,317.3 1640.4,278.6 1641.6,317.9 1642.9,277.6 1644.2,315.6 1645.5,280.6 1646.7,319.2 1648.0,281.3 1649.3,313.9 1650.5,279.8 1651.8,314.6 1653.1,278.9 1654.3,318.9 1655.6,263.5 1656.9,319.6 1658.2,278.3 1659.4,314.0 1660.7,281.7 1662.0,316.8 1663.2,276.5 1664.5,314.2 1665.7,278.3 1667.0,317.1 1668.2,274.6 1669.5,319.2 1670.8,278.3 1672.0,310.6 1673.3,280.9 1674.5,317.4 1675.8,262.0 1677.0,325.6 1678.3,277.1 1679.6,315.9 1680.8,277.9 1682.1,319.6 1683.3,279.8 1684.6,330.0 1685.8,275.7 1687.1,321.2 1688.4,274.9 1689.6,318.9 1690.9,282.0 1692.2,314.5 1693.4,270.0 1694.7,310.8 1696.0,278.5 1697.2,315.9 1698.5,279.4 1699.7,314.5 1701.0,273.3 1702.2,321.7 1703.5,275.9 1704.8,315.1 1706.0,274.2 1707.3,313.1 1708.6,266.0 1709.8,321.7 1711.1,274.9 1712.3,312.5 1713.6,279.7 1714.9,318.2 1716.1,278.1 1717.4,330.0 1718.6,275.9 1719.9,313.3 1721.2,266.0 1722.4,316.5 1723.7,280.0 1724.9,320.1 1726.2,278.1 1727.4,330.0 1728.7,275.0 1730.0,316.2 1731.2,278.2 1732.5,315.2 1733.7,284.4 1735.0,328.2" fill="none" stroke="#c2333f" stroke-width="1.5" stroke-linejoin="round" opacity="0.88"/><rect x="965.5" y="79.8" width="768.7" height="234.6" fill="none" stroke="#5e5e5e" stroke-width="1.8"/></svg>
<div class="t " style="left:945.85px;top:113.35px;font-family:'Liberation Sans',sans-serif;font-weight:normal;font-size:19.91px;line-height:25.89px;color:#111;transform:scaleX(0.9850);">1</div>
<div class="t " style="left:931.65px;top:182.45px;font-family:'Liberation Sans',sans-serif;font-weight:normal;font-size:19.91px;line-height:25.89px;color:#111;transform:scaleX(0.9850);">1m</div>
<div class="t " style="left:937.09px;top:253.35px;font-family:'Liberation Sans',sans-serif;font-weight:normal;font-size:19.91px;line-height:25.89px;color:#111;transform:scaleX(0.9850);">1u</div>
<div class="t " style="left:954.48px;top:318.85px;font-family:'Liberation Sans',sans-serif;font-weight:normal;font-size:19.91px;line-height:25.89px;color:#111;transform:scaleX(0.9850);">20</div>
<div class="t " style="left:999.72px;top:318.85px;font-family:'Liberation Sans',sans-serif;font-weight:normal;font-size:19.91px;line-height:25.89px;color:#111;transform:scaleX(0.9850);">30</div>
<div class="t " style="left:1056.55px;top:318.85px;font-family:'Liberation Sans',sans-serif;font-weight:normal;font-size:19.91px;line-height:25.89px;color:#111;transform:scaleX(0.9850);">50</div>
<div class="t " style="left:1128.67px;top:318.85px;font-family:'Liberation Sans',sans-serif;font-weight:normal;font-size:19.91px;line-height:25.89px;color:#111;transform:scaleX(0.9850);">100</div>
<div class="t " style="left:1205.26px;top:318.85px;font-family:'Liberation Sans',sans-serif;font-weight:normal;font-size:19.91px;line-height:25.89px;color:#111;transform:scaleX(0.9850);">200</div>
<div class="t " style="left:1250.50px;top:318.85px;font-family:'Liberation Sans',sans-serif;font-weight:normal;font-size:19.91px;line-height:25.89px;color:#111;transform:scaleX(0.9850);">300</div>
<div class="t " style="left:1307.33px;top:318.85px;font-family:'Liberation Sans',sans-serif;font-weight:normal;font-size:19.91px;line-height:25.89px;color:#111;transform:scaleX(0.9850);">500</div>
<div class="t " style="left:1390.51px;top:318.85px;font-family:'Liberation Sans',sans-serif;font-weight:normal;font-size:19.91px;line-height:25.89px;color:#111;transform:scaleX(0.9850);">1k</div>
<div class="t " style="left:1467.10px;top:318.85px;font-family:'Liberation Sans',sans-serif;font-weight:normal;font-size:19.91px;line-height:25.89px;color:#111;transform:scaleX(0.9850);">2k</div>
<div class="t " style="left:1512.34px;top:318.85px;font-family:'Liberation Sans',sans-serif;font-weight:normal;font-size:19.91px;line-height:25.89px;color:#111;transform:scaleX(0.9850);">3k</div>
<div class="t " style="left:1569.17px;top:318.85px;font-family:'Liberation Sans',sans-serif;font-weight:normal;font-size:19.91px;line-height:25.89px;color:#111;transform:scaleX(0.9850);">5k</div>
<div class="t " style="left:1641.29px;top:318.85px;font-family:'Liberation Sans',sans-serif;font-weight:normal;font-size:19.91px;line-height:25.89px;color:#111;transform:scaleX(0.9850);">10k</div>
<div class="t " style="left:1717.88px;top:318.85px;font-family:'Liberation Sans',sans-serif;font-weight:normal;font-size:19.91px;line-height:25.89px;color:#111;transform:scaleX(0.9850);">20k</div>
<div class="t " style="left:1286.22px;top:338.07px;font-family:'Liberation Sans',sans-serif;font-weight:normal;font-size:20.49px;line-height:26.64px;color:#111;transform:scaleX(0.8831);">Frequency (Hz)</div>
<div class="t " style="left:1334.66px;top:53.10px;font-family:'Liberation Serif',serif;font-weight:bold;font-size:19.55px;line-height:25.41px;color:#000;transform:scaleX(0.7247);">FFT</div>
<div class="t " style="left:906.13px;top:247.77px;font-family:'Liberation Sans',sans-serif;font-weight:normal;font-size:19.33px;line-height:25.13px;color:#111;transform:rotate(-90deg) scaleX(0.9927);">Level (Vrms)</div>
<div class="abs" style="left:0;top:374.8px;width:1786px;height:5px;background:#a9a9a8"></div>
<div class="abs" style="left:0;top:379.7px;width:1786px;height:11.7px;background:#487684"></div>
<div class="abs" style="left:881.9px;top:383px;width:4.8px;height:4.8px;border-radius:50%;background:#c9d9e2"></div>
<div class="abs" style="left:891.2px;top:383px;width:4.8px;height:4.8px;border-radius:50%;background:#c9d9e2"></div>
<div class="abs" style="left:900.5px;top:383px;width:4.8px;height:4.8px;border-radius:50%;background:#c9d9e2"></div>
<div class="abs" style="left:0;top:391.4px;width:1786px;height:39.2px;background:#d4d4d4"></div>
<div class="abs" style="left:0;top:391.4px;width:1786px;height:1.4px;background:#e2dfdf"></div>
<div class="abs" style="left:0;top:430.4px;width:1786px;height:2px;background:#dde5ec"></div>
<div class="abs" style="left:0;top:432.4px;width:1786px;height:4.8px;background:#a3a3a1"></div>
<svg style="left:3.1px;top:397.9px" width="25.0" height="26.0" viewBox="0 0 25 26"><rect width="25" height="26" fill="#274356"/><path d="M12.5 4V22M3.5 13H21.5" stroke="#fff" stroke-width="3.6" fill="none"/></svg>
<div class="t " style="left:33.16px;top:396.65px;font-family:'Liberation Sans',sans-serif;font-weight:normal;font-size:21.22px;line-height:27.59px;color:#111;transform:scaleX(0.9928);">Add Meter</div>
<div class="tri" style="left:141.2px;top:409.6px;border-left-width:4.3px;border-right-width:4.3px;border-top-width:5.0px"></div>
<div class="abs" style="left:161.0px;top:400.0px;width:1.5px;height:25.0px;background:#c2c6c8"></div><div class="abs" style="left:162.5px;top:401.5px;width:1.5px;height:25.0px;background:#f6f8f8"></div>
<svg style="left:168.0px;top:398.0px" width="25" height="26.3" viewBox="0 0 25 26.3"><rect width="25" height="26.3" fill="#274356"/><g fill="#fff"><rect x="1.8" y="6" width="12.6" height="16.5"/><ellipse cx="8.1" cy="6" rx="6.3" ry="2.9"/><ellipse cx="8.1" cy="22.3" rx="6.3" ry="2.4"/></g><g fill="none" stroke="#274356" stroke-width="1.1"><path d="M1.8 10.6Q8.1 13.4 14.4 10.6"/><path d="M1.8 15.2Q8.1 18 14.4 15.2"/><path d="M1.8 19.6Q8.1 22.4 14.4 19.6"/></g><ellipse cx="8.6" cy="5.6" rx="2.2" ry="0.8" fill="#6fa3ad"/><path d="M11 10.2H18.6V6.8L25 13.6L18.6 20.4V17H11Z" fill="#fff" stroke="#274356" stroke-width="1.2"/></svg>
<div class="t " style="left:197.50px;top:396.65px;font-family:'Liberation Sans',sans-serif;font-weight:normal;font-size:21.22px;line-height:27.59px;color:#111;transform:scaleX(0.9383);">Save Meter Data</div>
<div class="abs" style="left:364.6px;top:400.0px;width:1.5px;height:25.0px;background:#c2c6c8"></div><div class="abs" style="left:366.1px;top:401.5px;width:1.5px;height:25.0px;background:#f6f8f8"></div>
<svg style="left:372.0px;top:398.2px" width="24.4" height="25.5" viewBox="0 0 24.4 25.5"><rect width="24.4" height="25.5" fill="#274356"/><path d="M7.2 4.4L18.2 12.8L7.2 21Z" fill="#fff"/></svg>
<div class="t " style="left:400.86px;top:396.65px;font-family:'Liberation Sans',sans-serif;font-weight:normal;font-size:21.22px;line-height:27.59px;color:#111;transform:scaleX(0.9409);">Regulate</div>
<svg style="left:1752px;top:400px" width="26" height="22" viewBox="1752 400 26 22"><path d="M1763 402.8H1767V406.3H1770.9L1765 413L1759.1 406.3H1763Z" fill="#23497c"/><rect x="1754.7" y="416.1" width="20.4" height="3.1" rx="1" fill="#1f457a"/></svg>
<div class="panel" style="left:4.5px;top:437.6px;width:865.0px;height:259.5px;background:#dae4e6"></div><div class="abs" style="left:4.5px;top:477.4px;width:865.0px;height:1.5px;background:#f4f7f7"></div><div class="abs" style="left:4.5px;top:478.8px;width:865.0px;height:1.6px;background:#b4b8b8"></div><div class="abs" style="left:4.5px;top:480.4px;width:865.0px;height:1.5px;background:#f4f7f7"></div><div class="t " style="left:9.88px;top:441.93px;font-family:'Liberation Sans',sans-serif;font-weight:bold;font-size:24.86px;line-height:32.31px;color:#000;transform:scaleX(0.9765);">RMS Level</div><div class="dd" style="left:142.7px;top:437.6px;width:117.0px;height:40.0px"><div class="btn"></div><div class="tri" style="left:103.2px;top:17.8px;border-left-width:4.3px;border-right-width:4.3px;border-top-width:5.0px"></div></div><div class="t " style="left:149.61px;top:443.99px;font-family:'Liberation Sans',sans-serif;font-weight:normal;font-size:21.08px;line-height:27.40px;color:#111;transform:scaleX(0.9479);">Vrms</div><svg style="left:264.2px;top:444.6px" width="24.7" height="25.7" viewBox="0 0 24.7 25.7"><rect width="24.7" height="25.7" fill="#274356"/><rect x="1.3" y="4.6" width="22.2" height="16.4" fill="#fff"/><rect x="1.3" y="7.9" width="22.2" height="4.8" fill="#3e4d8c"/><rect x="1.3" y="12.7" width="22.2" height="4.8" fill="#3c7a86"/><path d="M1.8 17.5L8.6 10L14.6 17.5L23.2 7.6" fill="none" stroke="#fff" stroke-width="1.5"/></svg><div class="tri" style="left:291.8px;top:455.4px;border-left-width:4.3px;border-right-width:4.3px;border-top-width:5.0px"></div><svg style="left:311.0px;top:444.6px" width="24.7" height="25.6" viewBox="0 0 24.7 25.6"><rect width="24.7" height="25.6" fill="#274356"/><polygon points="11.52,3.24 13.18,3.24 14.04,6.42 15.66,7.09 18.53,5.45 19.70,6.62 18.06,9.49 18.73,11.11 21.91,11.97 21.91,13.63 18.73,14.49 18.06,16.11 19.70,18.98 18.53,20.15 15.66,18.51 14.04,19.18 13.18,22.36 11.52,22.36 10.66,19.18 9.04,18.51 6.17,20.15 5.00,18.98 6.64,16.11 5.97,14.49 2.79,13.63 2.79,11.97 5.97,11.11 6.64,9.49 5.00,6.62 6.17,5.45 9.04,7.09 10.66,6.42" fill="#fff" stroke="#fff" stroke-width="1.6" stroke-linejoin="round"/><circle cx="12.35" cy="12.80" r="3.1" fill="#2c3f66"/></svg><div class="abs" style="left:792.5px;top:445.6px;width:1.5px;height:25.0px;background:#c2c6c8"></div><div class="abs" style="left:794.0px;top:447.1px;width:1.5px;height:25.0px;background:#f6f8f8"></div><svg style="left:804.0px;top:447.1px" width="19" height="20" viewBox="0 0 19 20"><path d="M6 1.5H1.5V18.5H17.5V13.5" fill="none" stroke="#12327c" stroke-width="3"/><path d="M9.5 10 L15.5 4" fill="none" stroke="#12327c" stroke-width="3" stroke-linecap="round"/><path d="M10 0H19V9Z" fill="#12327c"/></svg><svg style="left:841.1px;top:448.8px" width="17" height="17" viewBox="0 0 17 17"><path d="M1.5 1.5L15.5 15.5M15.5 1.5L1.5 15.5" stroke="#13283a" stroke-width="3" fill="none"/></svg><div class="abs" style="left:8.5px;top:585.8px;width:218.3px;height:1.4px;background:#8a8e8e"></div><div class="abs" style="left:8.5px;top:587.2px;width:218.3px;height:1.2px;background:#f4f7f7"></div><div class="blk" style="left:226.8px;top:486.6px;width:628.8px;height:67.0px"></div><div class="blk" style="left:226.8px;top:619.4px;width:628.8px;height:69.2px"></div><div class="bar" style="left:227.3px;top:554.0px;width:627.8px;height:30.2px"><i style="width:463.8px"></i><b style="left:-1.3px;width:483.3px"></b></div><div class="bar" style="left:227.3px;top:589.2px;width:627.8px;height:30.2px"><i style="width:465.6px"></i><b style="left:-1.3px;width:480.3px"></b></div><div class="t " style="left:556.22px;top:488.54px;font-family:'Liberation Sans',sans-serif;font-weight:normal;font-size:53.63px;line-height:69.73px;color:#00ff00;transform:scaleX(0.8786);">4.040</div><div class="t " style="left:733.59px;top:488.54px;font-family:'Liberation Sans',sans-serif;font-weight:normal;font-size:53.63px;line-height:69.73px;color:#00ff00;transform:scaleX(0.8930);">Vrms</div><div class="t " style="left:556.22px;top:619.74px;font-family:'Liberation Sans',sans-serif;font-weight:normal;font-size:53.63px;line-height:69.73px;color:#00ff00;transform:scaleX(0.8804);">4.046</div><div class="t " style="left:733.59px;top:619.74px;font-family:'Liberation Sans',sans-serif;font-weight:normal;font-size:53.63px;line-height:69.73px;color:#00ff00;transform:scaleX(0.8930);">Vrms</div><div class="t " style="left:15.03px;top:503.47px;font-family:'Liberation Sans',sans-serif;font-weight:normal;font-size:52.91px;line-height:68.78px;color:#000;transform:scaleX(0.8465);-webkit-text-stroke:1.15px #dae4e6;">Ch1</div><div class="t " style="left:14.93px;top:607.07px;font-family:'Liberation Sans',sans-serif;font-weight:normal;font-size:52.91px;line-height:68.78px;color:#000;transform:scaleX(0.8832);-webkit-text-stroke:1.15px #dae4e6;">Ch2</div><div class="tri" style="left:206.1px;top:527.8px;border-left-width:8.3px;border-right-width:8.3px;border-top-width:15.8px"></div><div class="tri" style="left:206.1px;top:631.0px;border-left-width:8.3px;border-right-width:8.3px;border-top-width:15.8px"></div>
<div class="panel" style="left:878.8px;top:437.6px;width:865.0px;height:259.5px;background:#dae4e6"></div><div class="abs" style="left:878.8px;top:477.4px;width:865.0px;height:1.5px;background:#f4f7f7"></div><div class="abs" style="left:878.8px;top:478.8px;width:865.0px;height:1.6px;background:#b4b8b8"></div><div class="abs" style="left:878.8px;top:480.4px;width:865.0px;height:1.5px;background:#f4f7f7"></div><div class="t " style="left:885.51px;top:441.93px;font-family:'Liberation Sans',sans-serif;font-weight:bold;font-size:24.86px;line-height:32.31px;color:#000;transform:scaleX(1.0295);">THD+N Ratio</div><div class="dd" style="left:1053.4px;top:437.6px;width:117.0px;height:40.0px"><div class="btn"></div><div class="tri" style="left:103.2px;top:17.8px;border-left-width:4.3px;border-right-width:4.3px;border-top-width:5.0px"></div></div><div class="t " style="left:1059.70px;top:443.99px;font-family:'Liberation Sans',sans-serif;font-weight:normal;font-size:21.08px;line-height:27.40px;color:#111;transform:scaleX(0.9282);">%</div><svg style="left:1174.9px;top:444.6px" width="24.7" height="25.7" viewBox="0 0 24.7 25.7"><rect width="24.7" height="25.7" fill="#274356"/><rect x="1.3" y="4.6" width="22.2" height="16.4" fill="#fff"/><rect x="1.3" y="7.9" width="22.2" height="4.8" fill="#3e4d8c"/><rect x="1.3" y="12.7" width="22.2" height="4.8" fill="#3c7a86"/><path d="M1.8 17.5L8.6 10L14.6 17.5L23.2 7.6" fill="none" stroke="#fff" stroke-width="1.5"/></svg><div class="tri" style="left:1202.5px;top:455.4px;border-left-width:4.3px;border-right-width:4.3px;border-top-width:5.0px"></div><svg style="left:1221.7px;top:444.6px" width="24.7" height="25.6" viewBox="0 0 24.7 25.6"><rect width="24.7" height="25.6" fill="#274356"/><polygon points="11.52,3.24 13.18,3.24 14.04,6.42 15.66,7.09 18.53,5.45 19.70,6.62 18.06,9.49 18.73,11.11 21.91,11.97 21.91,13.63 18.73,14.49 18.06,16.11 19.70,18.98 18.53,20.15 15.66,18.51 14.04,19.18 13.18,22.36 11.52,22.36 10.66,19.18 9.04,18.51 6.17,20.15 5.00,18.98 6.64,16.11 5.97,14.49 2.79,13.63 2.79,11.97 5.97,11.11 6.64,9.49 5.00,6.62 6.17,5.45 9.04,7.09 10.66,6.42" fill="#fff" stroke="#fff" stroke-width="1.6" stroke-linejoin="round"/><circle cx="12.35" cy="12.80" r="3.1" fill="#2c3f66"/></svg><div class="abs" style="left:1666.8px;top:445.6px;width:1.5px;height:25.0px;background:#c2c6c8"></div><div class="abs" style="left:1668.3px;top:447.1px;width:1.5px;height:25.0px;background:#f6f8f8"></div><svg style="left:1678.3px;top:447.1px" width="19" height="20" viewBox="0 0 19 20"><path d="M6 1.5H1.5V18.5H17.5V13.5" fill="none" stroke="#12327c" stroke-width="3"/><path d="M9.5 10 L15.5 4" fill="none" stroke="#12327c" stroke-width="3" stroke-linecap="round"/><path d="M10 0H19V9Z" fill="#12327c"/></svg><svg style="left:1715.4px;top:448.8px" width="17" height="17" viewBox="0 0 17 17"><path d="M1.5 1.5L15.5 15.5M15.5 1.5L1.5 15.5" stroke="#13283a" stroke-width="3" fill="none"/></svg><div class="abs" style="left:882.8px;top:585.8px;width:218.3px;height:1.4px;background:#8a8e8e"></div><div class="abs" style="left:882.8px;top:587.2px;width:218.3px;height:1.2px;background:#f4f7f7"></div><div class="blk" style="left:1101.1px;top:486.6px;width:628.8px;height:67.0px"></div><div class="blk" style="left:1101.1px;top:619.4px;width:628.8px;height:69.2px"></div><div class="bar" style="left:1101.6px;top:554.0px;width:627.8px;height:30.2px"><i style="width:93.9px"></i><b style="left:53.6px;width:569.8px"></b></div><div class="bar" style="left:1101.6px;top:589.2px;width:627.8px;height:30.2px"><i style="width:83.1px"></i><b style="left:51.9px;width:571.5px"></b></div><div class="t " style="left:1449.66px;top:488.54px;font-family:'Liberation Sans',sans-serif;font-weight:normal;font-size:53.63px;line-height:69.73px;color:#00ff00;transform:scaleX(0.8793);">0.000792</div><div class="t " style="left:1681.87px;top:488.54px;font-family:'Liberation Sans',sans-serif;font-weight:normal;font-size:53.63px;line-height:69.73px;color:#00ff00;transform:scaleX(0.8549);">%</div><div class="t " style="left:1449.66px;top:619.74px;font-family:'Liberation Sans',sans-serif;font-weight:normal;font-size:53.63px;line-height:69.73px;color:#00ff00;transform:scaleX(0.8793);">0.000622</div><div class="t " style="left:1681.87px;top:619.74px;font-family:'Liberation Sans',sans-serif;font-weight:normal;font-size:53.63px;line-height:69.73px;color:#00ff00;transform:scaleX(0.8549);">%</div><div class="t " style="left:889.33px;top:503.47px;font-family:'Liberation Sans',sans-serif;font-weight:normal;font-size:52.91px;line-height:68.78px;color:#000;transform:scaleX(0.8465);-webkit-text-stroke:1.15px #dae4e6;">Ch1</div><div class="t " style="left:889.23px;top:607.07px;font-family:'Liberation Sans',sans-serif;font-weight:normal;font-size:52.91px;line-height:68.78px;color:#000;transform:scaleX(0.8832);-webkit-text-stroke:1.15px #dae4e6;">Ch2</div><div class="tri" style="left:1080.4px;top:527.8px;border-left-width:8.3px;border-right-width:8.3px;border-top-width:15.8px"></div><div class="tri" style="left:1080.4px;top:631.0px;border-left-width:8.3px;border-right-width:8.3px;border-top-width:15.8px"></div>
<div class="panel" style="left:4.5px;top:707.3px;width:865.0px;height:259.5px;background:#dae4e6"></div><div class="abs" style="left:4.5px;top:747.1px;width:865.0px;height:1.5px;background:#f4f7f7"></div><div class="abs" style="left:4.5px;top:748.5px;width:865.0px;height:1.6px;background:#b4b8b8"></div><div class="abs" style="left:4.5px;top:750.1px;width:865.0px;height:1.5px;background:#f4f7f7"></div><div class="t " style="left:10.78px;top:711.63px;font-family:'Liberation Sans',sans-serif;font-weight:bold;font-size:24.86px;line-height:32.31px;color:#000;transform:scaleX(1.0123);">SINAD</div><div class="dd" style="left:99.8px;top:707.3px;width:117.0px;height:40.0px"><div class="btn"></div><div class="tri" style="left:103.2px;top:17.8px;border-left-width:4.3px;border-right-width:4.3px;border-top-width:5.0px"></div></div><div class="t " style="left:105.62px;top:713.69px;font-family:'Liberation Sans',sans-serif;font-weight:normal;font-size:21.08px;line-height:27.40px;color:#111;transform:scaleX(0.9923);">dB</div><svg style="left:221.3px;top:714.3px" width="24.7" height="25.7" viewBox="0 0 24.7 25.7"><rect width="24.7" height="25.7" fill="#274356"/><rect x="1.3" y="4.6" width="22.2" height="16.4" fill="#fff"/><rect x="1.3" y="7.9" width="22.2" height="4.8" fill="#3e4d8c"/><rect x="1.3" y="12.7" width="22.2" height="4.8" fill="#3c7a86"/><path d="M1.8 17.5L8.6 10L14.6 17.5L23.2 7.6" fill="none" stroke="#fff" stroke-width="1.5"/></svg><div class="tri" style="left:248.9px;top:725.1px;border-left-width:4.3px;border-right-width:4.3px;border-top-width:5.0px"></div><svg style="left:268.1px;top:714.3px" width="24.7" height="25.6" viewBox="0 0 24.7 25.6"><rect width="24.7" height="25.6" fill="#274356"/><polygon points="11.52,3.24 13.18,3.24 14.04,6.42 15.66,7.09 18.53,5.45 19.70,6.62 18.06,9.49 18.73,11.11 21.91,11.97 21.91,13.63 18.73,14.49 18.06,16.11 19.70,18.98 18.53,20.15 15.66,18.51 14.04,19.18 13.18,22.36 11.52,22.36 10.66,19.18 9.04,18.51 6.17,20.15 5.00,18.98 6.64,16.11 5.97,14.49 2.79,13.63 2.79,11.97 5.97,11.11 6.64,9.49 5.00,6.62 6.17,5.45 9.04,7.09 10.66,6.42" fill="#fff" stroke="#fff" stroke-width="1.6" stroke-linejoin="round"/><circle cx="12.35" cy="12.80" r="3.1" fill="#2c3f66"/></svg><div class="abs" style="left:792.5px;top:715.3px;width:1.5px;height:25.0px;background:#c2c6c8"></div><div class="abs" style="left:794.0px;top:716.8px;width:1.5px;height:25.0px;background:#f6f8f8"></div><svg style="left:804.0px;top:716.8px" width="19" height="20" viewBox="0 0 19 20"><path d="M6 1.5H1.5V18.5H17.5V13.5" fill="none" stroke="#12327c" stroke-width="3"/><path d="M9.5 10 L15.5 4" fill="none" stroke="#12327c" stroke-width="3" stroke-linecap="round"/><path d="M10 0H19V9Z" fill="#12327c"/></svg><svg style="left:841.1px;top:718.5px" width="17" height="17" viewBox="0 0 17 17"><path d="M1.5 1.5L15.5 15.5M15.5 1.5L1.5 15.5" stroke="#13283a" stroke-width="3" fill="none"/></svg><div class="abs" style="left:8.5px;top:855.5px;width:218.3px;height:1.4px;background:#8a8e8e"></div><div class="abs" style="left:8.5px;top:856.9px;width:218.3px;height:1.2px;background:#f4f7f7"></div><div class="blk" style="left:226.8px;top:756.3px;width:628.8px;height:67.0px"></div><div class="blk" style="left:226.8px;top:889.1px;width:628.8px;height:69.2px"></div><div class="bar" style="left:227.3px;top:823.7px;width:627.8px;height:30.2px"><i style="width:532.6px"></i><b style="left:-1.3px;width:571.7px"></b></div><div class="bar" style="left:227.3px;top:858.9px;width:627.8px;height:30.2px"><i style="width:543.7px"></i><b style="left:-1.3px;width:573.5px"></b></div><div class="t " style="left:579.84px;top:758.24px;font-family:'Liberation Sans',sans-serif;font-weight:normal;font-size:53.63px;line-height:69.73px;color:#00ff00;transform:scaleX(0.8479);">102.031</div><div class="t " style="left:788.41px;top:758.24px;font-family:'Liberation Sans',sans-serif;font-weight:normal;font-size:53.63px;line-height:69.73px;color:#00ff00;transform:scaleX(0.8856);">dB</div><div class="t " style="left:579.73px;top:889.44px;font-family:'Liberation Sans',sans-serif;font-weight:normal;font-size:53.63px;line-height:69.73px;color:#00ff00;transform:scaleX(0.8742);">104.129</div><div class="t " style="left:788.41px;top:889.44px;font-family:'Liberation Sans',sans-serif;font-weight:normal;font-size:53.63px;line-height:69.73px;color:#00ff00;transform:scaleX(0.8856);">dB</div><div class="t " style="left:15.03px;top:773.17px;font-family:'Liberation Sans',sans-serif;font-weight:normal;font-size:52.91px;line-height:68.78px;color:#000;transform:scaleX(0.8465);-webkit-text-stroke:1.15px #dae4e6;">Ch1</div><div class="t " style="left:14.93px;top:876.77px;font-family:'Liberation Sans',sans-serif;font-weight:normal;font-size:52.91px;line-height:68.78px;color:#000;transform:scaleX(0.8832);-webkit-text-stroke:1.15px #dae4e6;">Ch2</div><div class="tri" style="left:206.1px;top:797.5px;border-left-width:8.3px;border-right-width:8.3px;border-top-width:15.8px"></div><div class="tri" style="left:206.1px;top:900.7px;border-left-width:8.3px;border-right-width:8.3px;border-top-width:15.8px"></div>
<div class="panel" style="left:878.8px;top:707.3px;width:865.0px;height:259.5px;background:#dae4e6"></div><div class="abs" style="left:878.8px;top:747.1px;width:865.0px;height:1.5px;background:#f4f7f7"></div><div class="abs" style="left:878.8px;top:748.5px;width:865.0px;height:1.6px;background:#b4b8b8"></div><div class="abs" style="left:878.8px;top:750.1px;width:865.0px;height:1.5px;background:#f4f7f7"></div><div class="t " style="left:884.07px;top:711.63px;font-family:'Liberation Sans',sans-serif;font-weight:bold;font-size:24.86px;line-height:32.31px;color:#000;transform:scaleX(1.0387);">IMD Ratio</div><div class="dd" style="left:1013.9px;top:707.3px;width:117.0px;height:40.0px"><div class="btn"></div><div class="tri" style="left:103.2px;top:17.8px;border-left-width:4.3px;border-right-width:4.3px;border-top-width:5.0px"></div></div><div class="t " style="left:1020.03px;top:713.69px;font-family:'Liberation Sans',sans-serif;font-weight:normal;font-size:21.08px;line-height:27.40px;color:#111;transform:scaleX(0.9797);">dB</div><svg style="left:1135.4px;top:714.3px" width="24.7" height="25.7" viewBox="0 0 24.7 25.7"><rect width="24.7" height="25.7" fill="#274356"/><rect x="1.3" y="4.6" width="22.2" height="16.4" fill="#fff"/><rect x="1.3" y="7.9" width="22.2" height="4.8" fill="#3e4d8c"/><rect x="1.3" y="12.7" width="22.2" height="4.8" fill="#3c7a86"/><path d="M1.8 17.5L8.6 10L14.6 17.5L23.2 7.6" fill="none" stroke="#fff" stroke-width="1.5"/></svg><div class="tri" style="left:1163.0px;top:725.1px;border-left-width:4.3px;border-right-width:4.3px;border-top-width:5.0px"></div><svg style="left:1182.2px;top:714.3px" width="24.7" height="25.6" viewBox="0 0 24.7 25.6"><rect width="24.7" height="25.6" fill="#274356"/><polygon points="11.52,3.24 13.18,3.24 14.04,6.42 15.66,7.09 18.53,5.45 19.70,6.62 18.06,9.49 18.73,11.11 21.91,11.97 21.91,13.63 18.73,14.49 18.06,16.11 19.70,18.98 18.53,20.15 15.66,18.51 14.04,19.18 13.18,22.36 11.52,22.36 10.66,19.18 9.04,18.51 6.17,20.15 5.00,18.98 6.64,16.11 5.97,14.49 2.79,13.63 2.79,11.97 5.97,11.11 6.64,9.49 5.00,6.62 6.17,5.45 9.04,7.09 10.66,6.42" fill="#fff" stroke="#fff" stroke-width="1.6" stroke-linejoin="round"/><circle cx="12.35" cy="12.80" r="3.1" fill="#2c3f66"/></svg><div class="abs" style="left:1666.8px;top:715.3px;width:1.5px;height:25.0px;background:#c2c6c8"></div><div class="abs" style="left:1668.3px;top:716.8px;width:1.5px;height:25.0px;background:#f6f8f8"></div><svg style="left:1678.3px;top:716.8px" width="19" height="20" viewBox="0 0 19 20"><path d="M6 1.5H1.5V18.5H17.5V13.5" fill="none" stroke="#12327c" stroke-width="3"/><path d="M9.5 10 L15.5 4" fill="none" stroke="#12327c" stroke-width="3" stroke-linecap="round"/><path d="M10 0H19V9Z" fill="#12327c"/></svg><svg style="left:1715.4px;top:718.5px" width="17" height="17" viewBox="0 0 17 17"><path d="M1.5 1.5L15.5 15.5M15.5 1.5L1.5 15.5" stroke="#13283a" stroke-width="3" fill="none"/></svg><div class="abs" style="left:882.8px;top:855.5px;width:218.3px;height:1.4px;background:#8a8e8e"></div><div class="abs" style="left:882.8px;top:856.9px;width:218.3px;height:1.2px;background:#f4f7f7"></div><div class="blk" style="left:1101.1px;top:756.3px;width:628.8px;height:67.0px"></div><div class="blk" style="left:1101.1px;top:889.1px;width:628.8px;height:69.2px"></div><div class="bar" style="left:1101.6px;top:823.7px;width:627.8px;height:30.2px"><i style="width:153.1px"></i><b style="left:128.4px;width:493.7px"></b></div><div class="bar" style="left:1101.6px;top:858.9px;width:627.8px;height:30.2px"><i style="width:150.1px"></i><b style="left:126.7px;width:495.4px"></b></div><div class="t " style="left:1460.39px;top:758.24px;font-family:'Liberation Sans',sans-serif;font-weight:normal;font-size:53.63px;line-height:69.73px;color:#00ff00;transform:scaleX(0.8873);">-90.823</div><div class="t " style="left:1662.68px;top:758.24px;font-family:'Liberation Sans',sans-serif;font-weight:normal;font-size:53.63px;line-height:69.73px;color:#00ff00;transform:scaleX(0.8955);">dB</div><div class="t " style="left:1460.37px;top:889.44px;font-family:'Liberation Sans',sans-serif;font-weight:normal;font-size:53.63px;line-height:69.73px;color:#00ff00;transform:scaleX(0.8924);">-91.492</div><div class="t " style="left:1662.68px;top:889.44px;font-family:'Liberation Sans',sans-serif;font-weight:normal;font-size:53.63px;line-height:69.73px;color:#00ff00;transform:scaleX(0.8955);">dB</div><div class="t " style="left:889.33px;top:773.17px;font-family:'Liberation Sans',sans-serif;font-weight:normal;font-size:52.91px;line-height:68.78px;color:#000;transform:scaleX(0.8465);-webkit-text-stroke:1.15px #dae4e6;">Ch1</div><div class="t " style="left:889.23px;top:876.77px;font-family:'Liberation Sans',sans-serif;font-weight:normal;font-size:52.91px;line-height:68.78px;color:#000;transform:scaleX(0.8832);-webkit-text-stroke:1.15px #dae4e6;">Ch2</div><div class="tri" style="left:1080.4px;top:797.5px;border-left-width:8.3px;border-right-width:8.3px;border-top-width:15.8px"></div><div class="tri" style="left:1080.4px;top:900.7px;border-left-width:8.3px;border-right-width:8.3px;border-top-width:15.8px"></div>
<div class="panel" style="left:4.5px;top:977.1px;width:865.0px;height:259.5px;background:#dae4e6"></div><div class="abs" style="left:4.5px;top:1016.9px;width:865.0px;height:1.5px;background:#f4f7f7"></div><div class="abs" style="left:4.5px;top:1018.3px;width:865.0px;height:1.6px;background:#b4b8b8"></div><div class="abs" style="left:4.5px;top:1019.9px;width:865.0px;height:1.5px;background:#f4f7f7"></div><div class="t " style="left:9.87px;top:981.43px;font-family:'Liberation Sans',sans-serif;font-weight:bold;font-size:24.86px;line-height:32.31px;color:#000;transform:scaleX(0.9790);">Frequency</div><div class="dd" style="left:144.6px;top:977.1px;width:117.0px;height:40.0px"><div class="btn"></div><div class="tri" style="left:103.2px;top:17.8px;border-left-width:4.3px;border-right-width:4.3px;border-top-width:5.0px"></div></div><div class="t " style="left:149.72px;top:983.49px;font-family:'Liberation Sans',sans-serif;font-weight:normal;font-size:21.08px;line-height:27.40px;color:#111;transform:scaleX(0.9704);">Hz</div><svg style="left:266.1px;top:984.1px" width="24.7" height="25.7" viewBox="0 0 24.7 25.7"><rect width="24.7" height="25.7" fill="#274356"/><rect x="1.3" y="4.6" width="22.2" height="16.4" fill="#fff"/><rect x="1.3" y="7.9" width="22.2" height="4.8" fill="#3e4d8c"/><rect x="1.3" y="12.7" width="22.2" height="4.8" fill="#3c7a86"/><path d="M1.8 17.5L8.6 10L14.6 17.5L23.2 7.6" fill="none" stroke="#fff" stroke-width="1.5"/></svg><div class="tri" style="left:293.7px;top:994.9px;border-left-width:4.3px;border-right-width:4.3px;border-top-width:5.0px"></div><svg style="left:312.9px;top:984.1px" width="24.7" height="25.6" viewBox="0 0 24.7 25.6"><rect width="24.7" height="25.6" fill="#274356"/><polygon points="11.52,3.24 13.18,3.24 14.04,6.42 15.66,7.09 18.53,5.45 19.70,6.62 18.06,9.49 18.73,11.11 21.91,11.97 21.91,13.63 18.73,14.49 18.06,16.11 19.70,18.98 18.53,20.15 15.66,18.51 14.04,19.18 13.18,22.36 11.52,22.36 10.66,19.18 9.04,18.51 6.17,20.15 5.00,18.98 6.64,16.11 5.97,14.49 2.79,13.63 2.79,11.97 5.97,11.11 6.64,9.49 5.00,6.62 6.17,5.45 9.04,7.09 10.66,6.42" fill="#fff" stroke="#fff" stroke-width="1.6" stroke-linejoin="round"/><circle cx="12.35" cy="12.80" r="3.1" fill="#2c3f66"/></svg><div class="abs" style="left:792.5px;top:985.1px;width:1.5px;height:25.0px;background:#c2c6c8"></div><div class="abs" style="left:794.0px;top:986.6px;width:1.5px;height:25.0px;background:#f6f8f8"></div><svg style="left:804.0px;top:986.6px" width="19" height="20" viewBox="0 0 19 20"><path d="M6 1.5H1.5V18.5H17.5V13.5" fill="none" stroke="#12327c" stroke-width="3"/><path d="M9.5 10 L15.5 4" fill="none" stroke="#12327c" stroke-width="3" stroke-linecap="round"/><path d="M10 0H19V9Z" fill="#12327c"/></svg><svg style="left:841.1px;top:988.3px" width="17" height="17" viewBox="0 0 17 17"><path d="M1.5 1.5L15.5 15.5M15.5 1.5L1.5 15.5" stroke="#13283a" stroke-width="3" fill="none"/></svg><div class="abs" style="left:8.5px;top:1125.3px;width:218.3px;height:1.4px;background:#8a8e8e"></div><div class="abs" style="left:8.5px;top:1126.7px;width:218.3px;height:1.2px;background:#f4f7f7"></div><div class="blk" style="left:226.8px;top:1026.1px;width:628.8px;height:67.0px"></div><div class="blk" style="left:226.8px;top:1158.9px;width:628.8px;height:69.2px"></div><div class="bar" style="left:227.3px;top:1093.5px;width:627.8px;height:30.2px"><i style="width:355.5px"></i><b style="left:-1.3px;width:625.5px"></b></div><div class="bar" style="left:227.3px;top:1128.7px;width:627.8px;height:30.2px"><i style="width:355.5px"></i><b style="left:-1.3px;width:625.5px"></b></div><div class="t " style="left:547.56px;top:1028.04px;font-family:'Liberation Sans',sans-serif;font-weight:normal;font-size:53.63px;line-height:69.73px;color:#00ff00;transform:scaleX(0.8663);">1.00000</div><div class="t " style="left:764.98px;top:1028.04px;font-family:'Liberation Sans',sans-serif;font-weight:normal;font-size:53.63px;line-height:69.73px;color:#00ff00;transform:scaleX(0.9177);">kHz</div><div class="t " style="left:547.56px;top:1159.24px;font-family:'Liberation Sans',sans-serif;font-weight:normal;font-size:53.63px;line-height:69.73px;color:#00ff00;transform:scaleX(0.8663);">1.00000</div><div class="t " style="left:764.98px;top:1159.24px;font-family:'Liberation Sans',sans-serif;font-weight:normal;font-size:53.63px;line-height:69.73px;color:#00ff00;transform:scaleX(0.9177);">kHz</div><div class="t " style="left:15.03px;top:1042.97px;font-family:'Liberation Sans',sans-serif;font-weight:normal;font-size:52.91px;line-height:68.78px;color:#000;transform:scaleX(0.8465);-webkit-text-stroke:1.15px #dae4e6;">Ch1</div><div class="t " style="left:14.93px;top:1146.57px;font-family:'Liberation Sans',sans-serif;font-weight:normal;font-size:52.91px;line-height:68.78px;color:#000;transform:scaleX(0.8832);-webkit-text-stroke:1.15px #dae4e6;">Ch2</div><div class="tri" style="left:206.1px;top:1067.3px;border-left-width:8.3px;border-right-width:8.3px;border-top-width:15.8px"></div><div class="tri" style="left:206.1px;top:1170.5px;border-left-width:8.3px;border-right-width:8.3px;border-top-width:15.8px"></div>
<div class="abs" style="left:881.8px;top:980px;width:861.2px;height:254.4px;border:2px solid #111"></div>
<svg style="left:1230.5px;top:1094.0px" width="25.2" height="25.6" viewBox="0 0 25 26"><rect width="25" height="26" fill="#274356"/><path d="M12.5 4V22M3.5 13H21.5" stroke="#fff" stroke-width="3.6" fill="none"/></svg>
<div class="t " style="left:1262.45px;top:1094.25px;font-family:'Liberation Sans',sans-serif;font-weight:normal;font-size:21.22px;line-height:27.59px;color:#111;transform:scaleX(1.0888);">Add meter...</div>
</div></body></html>
